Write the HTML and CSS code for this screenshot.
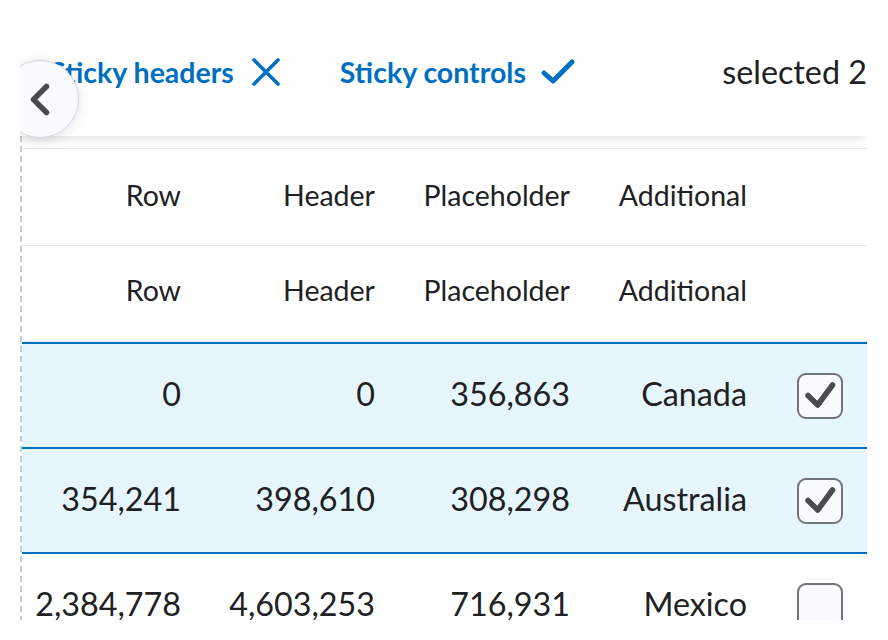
FILE: index.html
```html
<!DOCTYPE html>
<html lang="en">
<head>
<meta charset="utf-8">
<title>Sticky table</title>
<link rel="stylesheet" href="styles.css">
</head>
<body>
<div class="viewport">
  <button class="scroll-btn" aria-label="Scroll left">
    <svg width="78" height="78" viewBox="0 0 78 78"><polyline points="45.5,26.5 32.5,39.5 45.5,52.5" fill="none" stroke="#494c4e" stroke-width="5.5" stroke-linecap="round" stroke-linejoin="round"/></svg>
  </button>
  <div class="controls">
    <button class="subtle">Sticky headers
      <svg class="ico-x" width="30" height="30" viewBox="0 0 30 30"><path d="M3 3 L27 27 M27 3 L3 27" fill="none" stroke="#006fbf" stroke-width="3.6" stroke-linecap="round"/></svg>
    </button>
    <button class="subtle">Sticky controls
      <svg class="ico-check" width="36" height="28" viewBox="0 0 36 28"><polyline points="4,15 13,23 32,4" fill="none" stroke="#006fbf" stroke-width="5" stroke-linecap="round" stroke-linejoin="round"/></svg>
    </button>
    <span class="count">selected 2</span>
  </div>
  <div class="table-wrap">
    <table class="grid">
      <colgroup>
        <col class="c1"><col class="c2"><col class="c3"><col class="c4"><col class="c5">
      </colgroup>
      <thead>
        <tr class="head-1"><th>Row</th><th>Header</th><th>Placeholder</th><th>Additional</th><th></th></tr>
        <tr class="head-2"><th>Row</th><th>Header</th><th>Placeholder</th><th>Additional</th><th></th></tr>
      </thead>
      <tbody>
        <tr class="selected first"><td>0</td><td>0</td><td>356,863</td><td>Canada</td><td class="sel"><span class="cb checked"><svg width="42" height="42" viewBox="0 0 42 42"><polyline points="9,20.5 18.7,30 33.5,10" fill="none" stroke="#494c4e" stroke-width="5.5" stroke-linecap="round" stroke-linejoin="round"/></svg></span></td></tr>
        <tr class="selected"><td>354,241</td><td>398,610</td><td>308,298</td><td>Australia</td><td class="sel"><span class="cb checked"><svg width="42" height="42" viewBox="0 0 42 42"><polyline points="9,20.5 18.7,30 33.5,10" fill="none" stroke="#494c4e" stroke-width="5.5" stroke-linecap="round" stroke-linejoin="round"/></svg></span></td></tr>
        <tr><td>2,384,778</td><td>4,603,253</td><td>716,931</td><td>Mexico</td><td class="sel"><span class="cb"></span></td></tr>
      </tbody>
    </table>
  </div>
</div>
</body>
</html>
```

FILE: styles.css
```css
* { box-sizing: border-box; }

html, body {
  margin: 0;
  padding: 0;
  background: #ffffff;
}

body {
  font-family: Lato, "Noto Sans", sans-serif;
  color: #202122;
}

.viewport {
  position: relative;
  margin-left: 20px;
  width: 847px;
  height: 620px;
  overflow: hidden;
}

.scroll-btn {
  position: absolute;
  left: -19px;
  top: 60px;
  z-index: 3;
  width: 78px;
  height: 78px;
  padding: 0;
  border: 1px solid #d3d9e3;
  border-radius: 50%;
  background: #f9fbff;
  box-shadow: 0 2px 12px rgba(0, 0, 0, 0.12);
  display: flex;
  align-items: center;
  justify-content: center;
}

.scroll-btn svg { display: block; flex: none; }

.controls {
  position: relative;
  z-index: 2;
  height: 136px;
  padding: 48px 0 0 30px;
  display: flex;
  align-items: flex-start;
  background: #ffffff;
  box-shadow: 0 5px 10px -3px rgba(0, 0, 0, 0.13);
}

.subtle {
  display: flex;
  align-items: center;
  gap: 17px;
  height: 48px;
  padding: 0;
  border: 0;
  background: none;
  font-family: Lato, "Noto Sans", sans-serif;
  font-weight: 700;
  font-size: 28.5px;
  color: #006fbf;
  white-space: nowrap;
}

.subtle + .subtle { margin-left: 59px; }

.subtle svg { display: block; flex: none; }

.subtle .ico-check { margin-left: -3px; }

.count {
  margin-left: auto;
  height: 48px;
  line-height: 48px;
  font-size: 32.3px;
  color: #202122;
  white-space: nowrap;
}

.table-wrap {
  padding: 12px 0 0 2px;
  background-image: repeating-linear-gradient(to bottom, #c6ced6 0, #c6ced6 6px, transparent 6px, transparent 10px);
  background-size: 2px 100%;
  background-repeat: no-repeat;
  height: 484px;
}

.grid {
  table-layout: fixed;
  width: 845px;
  border-collapse: separate;
  border-spacing: 0;
  font-size: 28.5px;
  line-height: 36px;
}

.c1 { width: 183px; }
.c2 { width: 194px; }
.c3 { width: 195px; }
.c4 { width: 177px; }
.c5 { width: 96px; }

.grid th,
.grid td {
  text-align: right;
  padding: 0 24px 0 0;
  vertical-align: middle;
  white-space: nowrap;
  font-weight: 400;
  color: #202122;
}

.head-1 th {
  border-top: 1px solid #e3e9f1;
  border-bottom: 1px solid #e3e9f1;
  padding-top: 28px;
  padding-bottom: 32px;
}

.head-2 th {
  border-bottom: 1px solid #e3e9f1;
  padding-top: 26px;
  padding-bottom: 33px;
}

.grid td {
  font-size: 32.3px;
  line-height: 40px;
  padding-top: 30px;
  padding-bottom: 33px;
}

.selected td {
  background: #e6f6fe;
  border-bottom: 2px solid #006fbf;
}

.selected.first td { border-top: 2px solid #006fbf; }

.grid td.sel {
  padding: 0 0 0 2px;
  font-size: 0;
  line-height: 0;
}

.cb {
  display: block;
  margin: 0 auto;
  width: 46px;
  height: 46px;
  border: 2px solid #6e7477;
  border-radius: 9px;
  background: #f9fbff;
}

.cb svg { display: block; }
```
